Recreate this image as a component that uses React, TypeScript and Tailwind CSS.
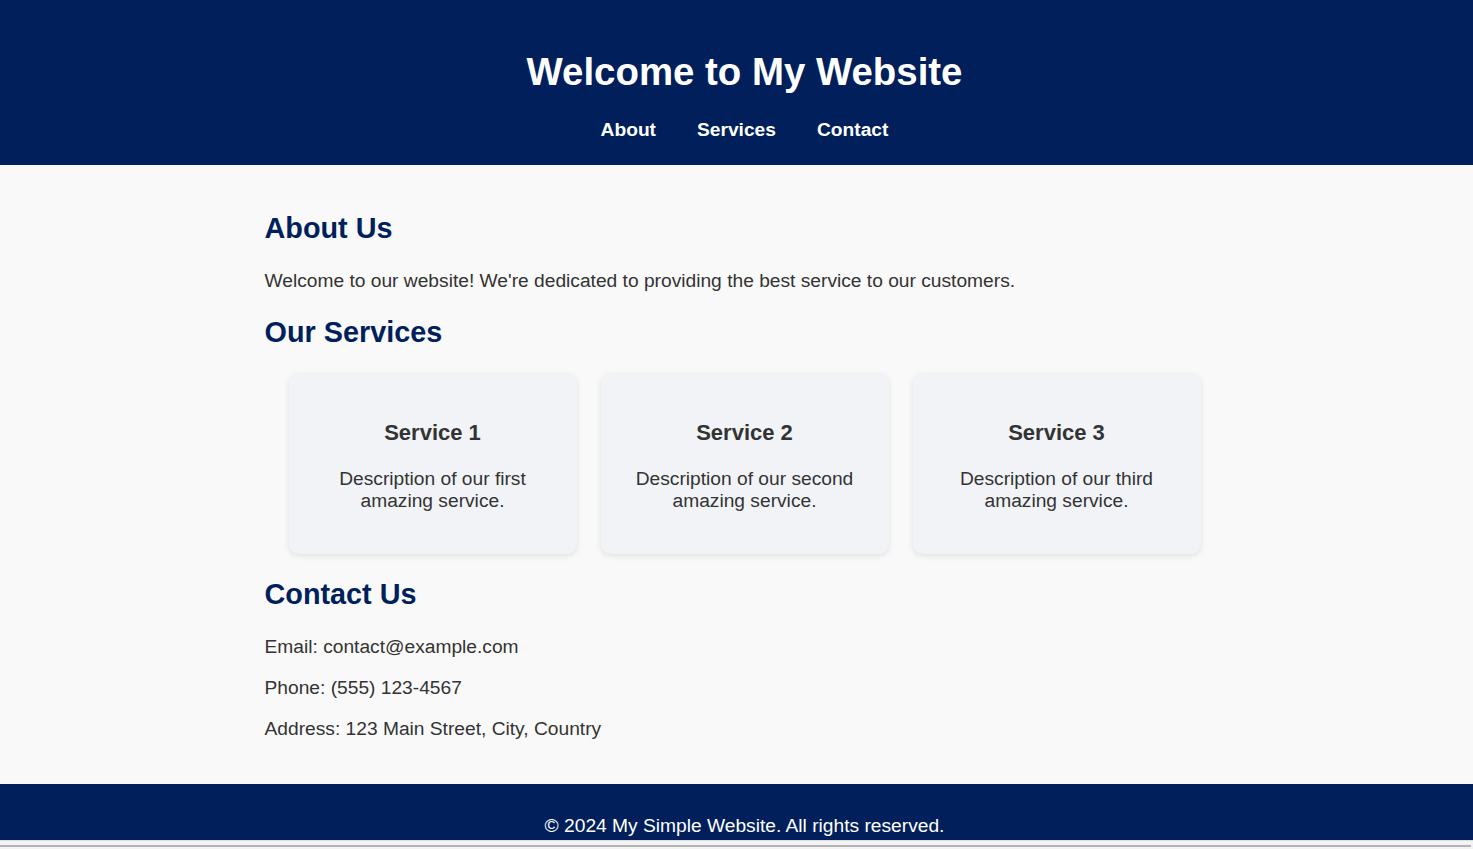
export default function App() {
  const services = [
    { title: "Service 1", text: "Description of our first amazing service." },
    { title: "Service 2", text: "Description of our second amazing service." },
    { title: "Service 3", text: "Description of our third amazing service." },
  ];

  return (
    <div className="relative h-screen w-full overflow-hidden bg-[#f9f9f9] font-['Liberation_Sans',Arial,sans-serif]">
      <div className="w-[1489px]">
        {/* Header */}
        <header className="bg-[#001f5b] text-white text-center pt-[50px] pb-[24px]">
          <h1 className="text-[38.4px] leading-[44px] font-bold">Welcome to My Website</h1>
          <nav className="mt-[25px] flex justify-center gap-[41px] text-[19.2px] leading-[22px] font-bold">
            <a href="#about">About</a>
            <a href="#services">Services</a>
            <a href="#contact">Contact</a>
          </nav>
        </header>

        {/* Main */}
        <main className="w-[960px] mx-auto pt-[47px] pb-[44px] text-[#333] text-[19.2px] leading-[22px]">
          <section id="about">
            <h2 className="text-[28.8px] leading-[33px] font-bold text-[#001f5b]">About Us</h2>
            <p className="mt-[25px]">Welcome to our website! We're dedicated to providing the best service to our customers.</p>
          </section>

          <section id="services" className="mt-[24px]">
            <h2 className="text-[28.8px] leading-[33px] font-bold text-[#001f5b]">Our Services</h2>
            <div className="mt-[24px] px-6 grid grid-cols-3 gap-6">
              {services.map((s) => (
                <div
                  key={s.title}
                  className="rounded-[10px] bg-[#f1f3f7] shadow-[0_2px_6px_rgba(0,0,0,0.1)] px-6 pt-[47px] pb-[42px] text-center"
                >
                  <h3 className="text-[22px] leading-[25px] font-bold">{s.title}</h3>
                  <p className="mt-[23px]">{s.text}</p>
                </div>
              ))}
            </div>
          </section>

          <section id="contact" className="mt-[24px]">
            <h2 className="text-[28.8px] leading-[33px] font-bold text-[#001f5b]">Contact Us</h2>
            <p className="mt-[25px]">Email: contact@example.com</p>
            <p className="mt-[19px]">Phone: (555) 123-4567</p>
            <p className="mt-[19px]">Address: 123 Main Street, City, Country</p>
          </section>
        </main>

        {/* Footer */}
        <footer className="bg-[#001f5b] text-white text-center pt-[31px] pb-[27px] text-[19.2px] leading-[22px]">
          <p>© 2024 My Simple Website. All rights reserved.</p>
        </footer>
      </div>

      {/* horizontal scrollbar strip */}
      <div className="absolute bottom-0 left-0 right-0 h-[9px] bg-[#f3f3f3] border-t border-[#dedede]">
        <div className="absolute left-0 right-[2px] bottom-[2px] h-[2px] bg-[#b4b4b4]" />
      </div>
    </div>
  );
}
